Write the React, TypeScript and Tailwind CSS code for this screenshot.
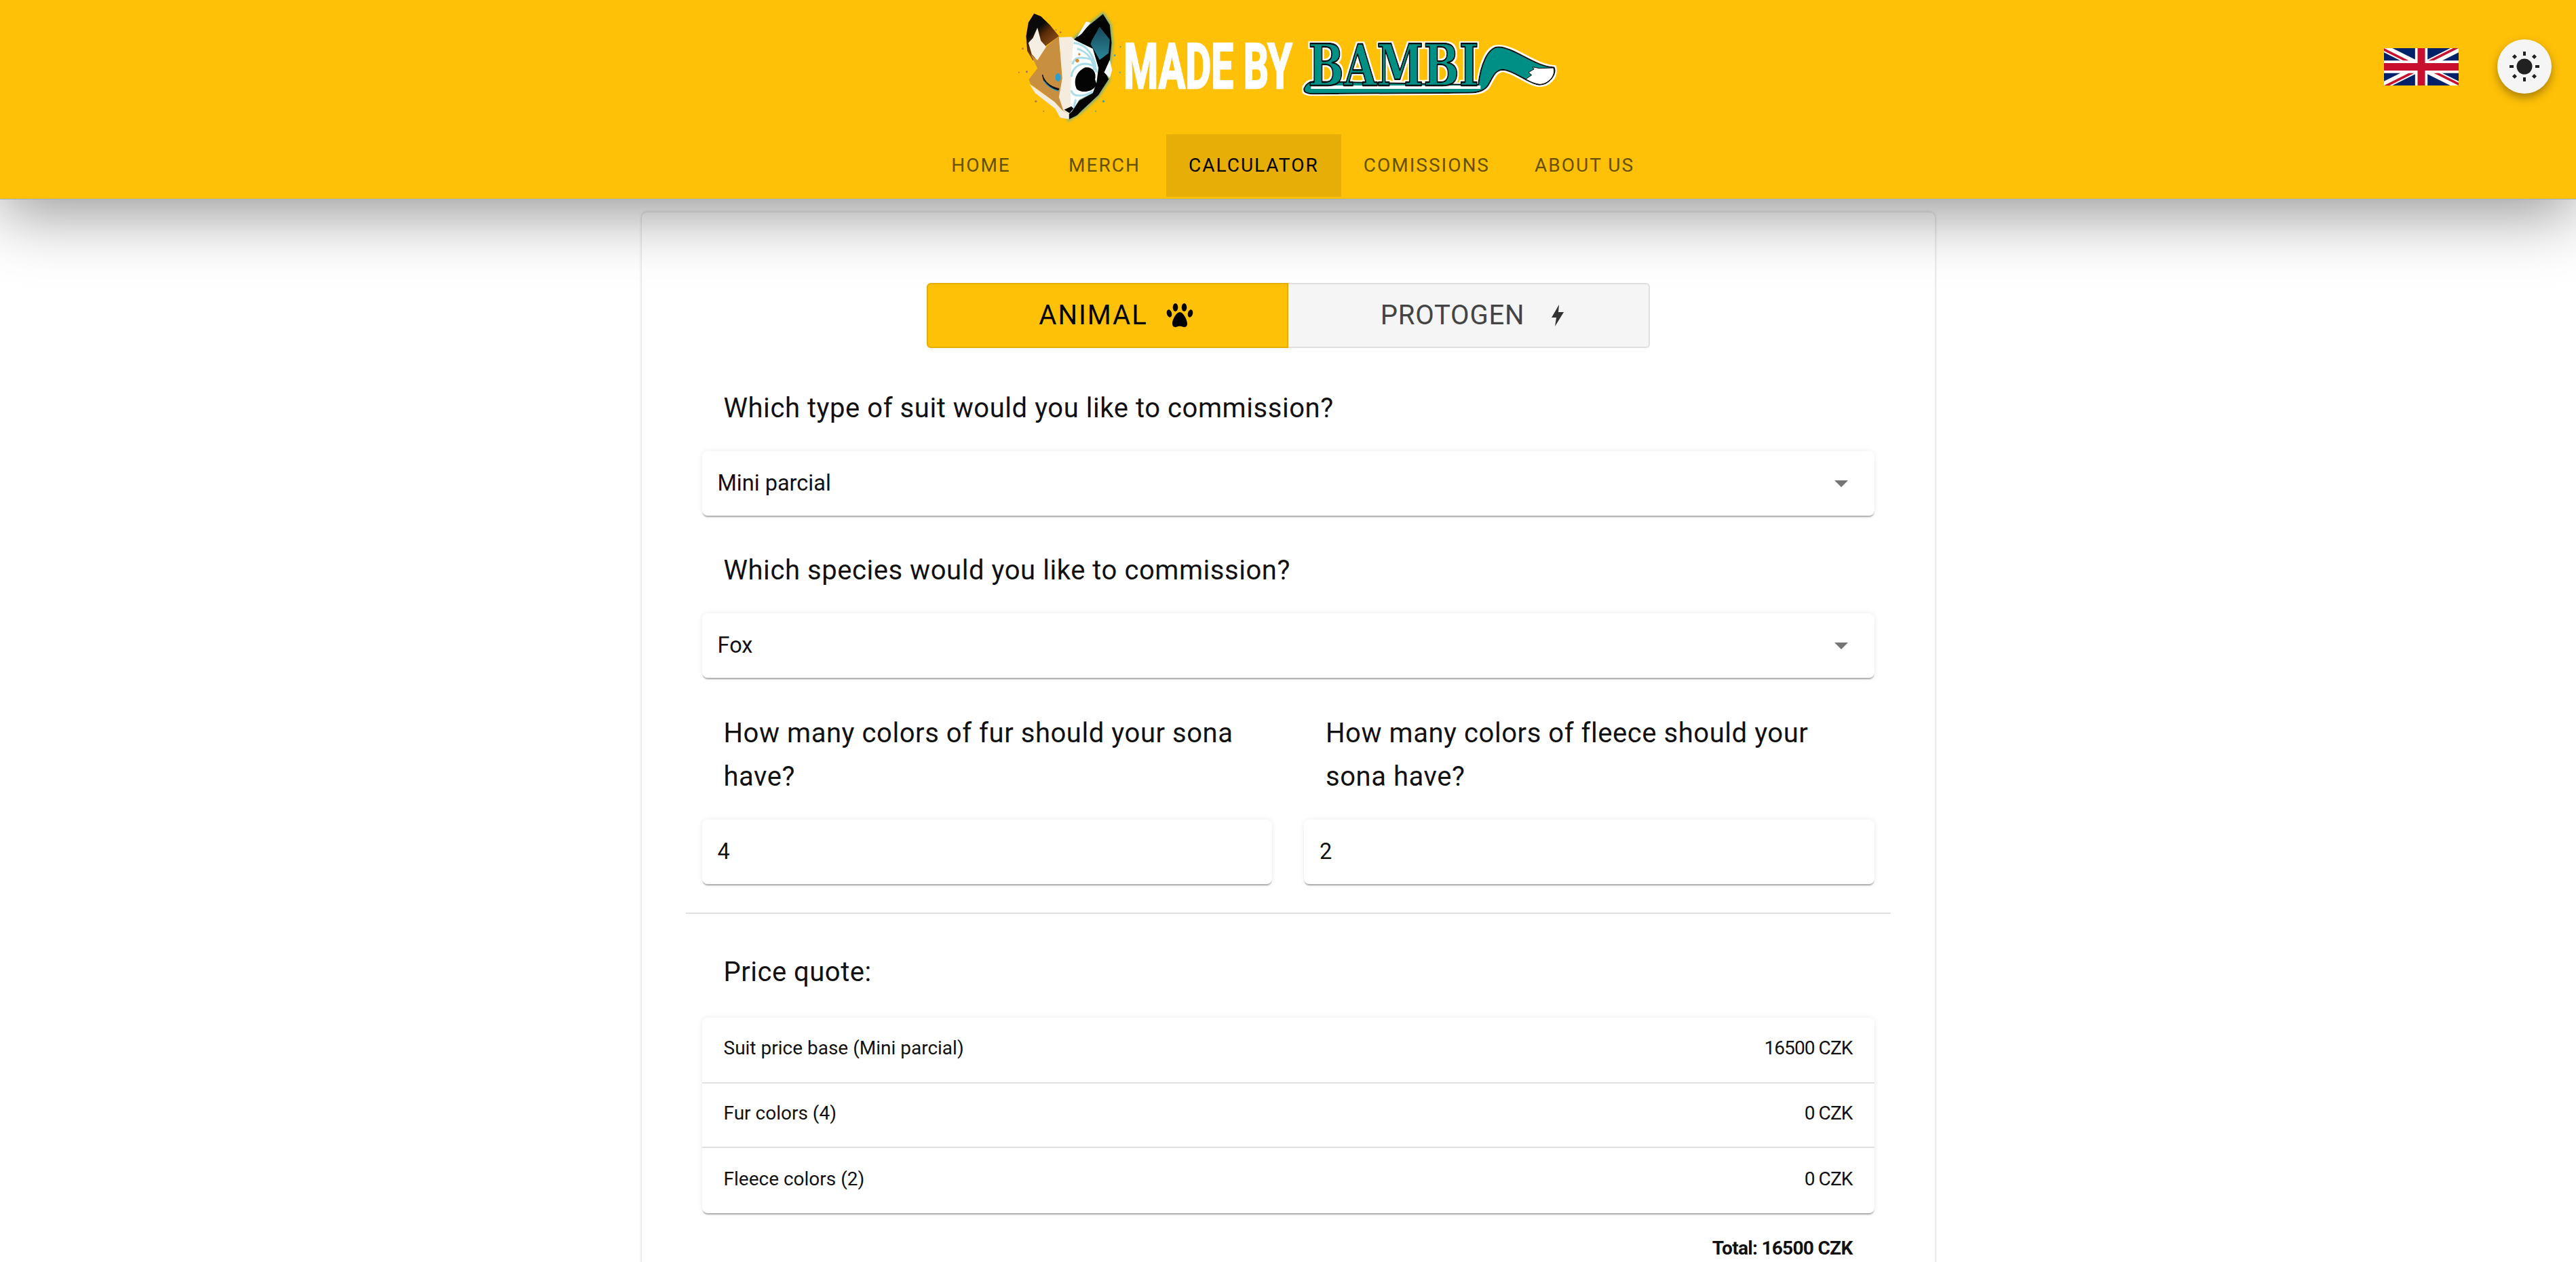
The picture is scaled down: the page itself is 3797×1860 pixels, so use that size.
import React from 'react';

const font = 'font-["Roboto",sans-serif]';

const FoxLogo = () => (
  <svg viewBox="0 0 530 570" className="w-[177px] h-[190px] shrink-0">
    <defs>
      <linearGradient id="earLeft" x1="0.3" y1="0" x2="0.7" y2="0.6">
        <stop offset="0.4" stopColor="#0a0a0a" />
        <stop offset="0.7" stopColor="#5b2c08" />
        <stop offset="1" stopColor="#7a4312" />
      </linearGradient>
      <linearGradient id="earRight" x1="0.5" y1="0" x2="0.5" y2="1">
        <stop offset="0" stopColor="#17485a" />
        <stop offset="1" stopColor="#2b8798" />
      </linearGradient>
    </defs>
    {/* glow behind the dark half */}
    <path d="M440 62L470 110L478 190L470 270L450 320L465 350L420 420L345 490L290 527V300L310 175L380 110Z" fill="#2aa6c8" opacity="0.65" stroke="#2aa6c8" strokeWidth="14" style={{ filter: 'blur(6px)' }} />
    {/* left ear */}
    <path d="M135 60L110 100L100 160L105 225L130 268L190 200L245 160L205 110L165 72Z" fill="url(#earLeft)" />
    <path d="M150 122L130 168L110 190L125 240L150 267L190 208L165 180Z" fill="#f5eee3" />
    {/* tan half */}
    <path d="M245 160L190 205L150 267L120 240L150 302L112 352L120 372L225 450L262 490L290 505L260 345Z" fill="#c98f41" />
    <path d="M115 372L225 450L262 490L290 505V527L250 520L228 480L140 412Z" fill="#f4ecdf" />
    {/* cream half */}
    <path d="M245 165L300 163L320 180L395 215L420 300L410 360L400 400L340 430L300 480L290 505L265 490L245 430L260 345Z" fill="#f4ecdf" />
    <path d="M310 175L395 215L420 300L410 370L395 410L335 440L305 490L296 505L300 300Z" fill="#ffffff" />
    <path d="M310 190C370 195 405 250 410 320M325 215C375 230 400 270 400 310M305 285C310 250 350 250 385 262M300 340C305 290 350 270 395 290M300 400C305 430 350 430 395 405M320 440C312 460 310 480 320 500" fill="none" stroke="#a9dbe9" strokeWidth="9" />
    {/* dark half */}
    <path d="M440 62L470 110L478 190L470 270L450 320L465 350L420 420L345 490L325 510L290 527V505L305 490L335 445L395 412L412 365L420 300L395 215L312 175L380 110Z" fill="#040404" />
    <path d="M425 118L390 180L385 195L425 265L465 235L470 175L450 150Z" fill="url(#earRight)" />
    <path d="M470 265L445 320L470 345L480 310Z" fill="#f2fbff" />
    <path d="M365 95L325 165L345 150L385 100Z" fill="#f2fbff" />
    {/* eye socket, nose, closed eye */}
    <path d="M362 298C395 295 412 320 405 352L412 372C400 405 350 415 325 395C310 370 312 320 362 298Z" fill="#040404" />
    <path d="M268 485L300 470L310 480L292 500Z" fill="#040404" />
    <path d="M172 330C182 362 205 383 245 392L243 398C205 392 175 370 172 330Z" fill="#111111" stroke="#111111" strokeWidth="3" />
    <path d="M178 358C195 382 215 395 243 403" fill="none" stroke="#2a9fd0" strokeWidth="4" />
    <ellipse cx="241" cy="342" rx="12" ry="18" fill="#2a9fd0" />
    <circle cx="326" cy="268" r="8" fill="#d9892f" />
    <circle cx="335" cy="240" r="5" fill="#d9892f" />
    {/* flecks */}
    <circle cx="85" cy="215" r="4" fill="#b07a4a" />
    <circle cx="103" cy="317" r="5" fill="#b07a4a" />
    <circle cx="143" cy="448" r="5" fill="#b07a4a" />
    <circle cx="252" cy="143" r="4" fill="#b07a4a" />
    <circle cx="232" cy="133" r="3" fill="#b07a4a" />
    <circle cx="68" cy="320" r="3" fill="#b07a4a" />
    <circle cx="177" cy="492" r="3" fill="#b07a4a" />
    <circle cx="442" cy="448" r="5" fill="#2a9fd0" />
    <circle cx="408" cy="492" r="3" fill="#2a9fd0" />
    <circle cx="517" cy="207" r="3" fill="#2a9fd0" />
    <circle cx="492" cy="245" r="4" fill="#2a9fd0" />
    <circle cx="515" cy="320" r="3" fill="#2a9fd0" />
  </svg>
);

const MadeBy = () => (
  <svg viewBox="0 0 251 190" className="w-[251px] h-[190px] shrink-0 overflow-visible">
    <text transform="translate(0 130) scale(0.78 1)" textLength="319" lengthAdjust="spacingAndGlyphs" fontFamily="'Liberation Sans Narrow','Roboto',sans-serif" fontWeight="700" fontSize="92" fill="#fff" stroke="#fff" strokeWidth="2.5">MADE BY</text>
  </svg>
);

const BambiLogo = () => (
  <svg viewBox="0 0 1260 570" className="w-[420px] h-[190px] shrink-0 -ml-[8px]">
    <defs>
      <filter id="outline" x="-5%" y="-5%" width="110%" height="110%">
        <feMorphology in="SourceAlpha" operator="dilate" radius="7" result="fat" />
        <feFlood floodColor="#fff" />
        <feComposite in2="fat" operator="in" result="halo" />
        <feMerge>
          <feMergeNode in="halo" />
          <feMergeNode in="SourceGraphic" />
        </feMerge>
      </filter>
    </defs>
    <g filter="url(#outline)" transform="translate(0 90)">
      <path d="M70 300C78 280 95 272 110 270L840 285C850 200 880 118 930 118C1000 120 1090 205 1175 208C1188 240 1150 285 1110 285C1060 280 1000 222 950 218C915 218 905 250 885 285C870 310 840 320 800 320L105 325C85 325 65 318 70 300Z" fill="#008f85" stroke="#111" strokeWidth="6" strokeLinejoin="round" />
      <path d="M1172 210C1186 240 1150 284 1110 283C1090 280 1070 272 1050 260L1076 242L1062 230L1086 216L1080 206L1110 212Z" fill="#fff" stroke="#111" strokeWidth="3" />
      <path d="M100 288H850V303H100Z" fill="#fff" />
      <text x="88" y="289" textLength="755" lengthAdjust="spacingAndGlyphs" fontFamily="'DejaVu Serif',serif" fontWeight="700" fontSize="254" fill="#008f85" stroke="#111" strokeWidth="7" strokeLinejoin="round">BAMBI</text>
    </g>
  </svg>
);

const UkFlag = () => (
  <svg viewBox="0 0 60 30" preserveAspectRatio="none" className="w-[110px] h-[55px]">
    <defs>
      <clipPath id="jack">
        <path d="M30 15H60V30ZV30H0ZH0V0ZV0H60Z" />
      </clipPath>
    </defs>
    <rect width="60" height="30" fill="#012169" />
    <path d="M0 0L60 30M60 0L0 30" stroke="#fff" strokeWidth="6" />
    <path d="M0 0L60 30M60 0L0 30" stroke="#c8102e" strokeWidth="4" clipPath="url(#jack)" />
    <path d="M30 0V30M0 15H60" stroke="#fff" strokeWidth="10" />
    <path d="M30 0V30M0 15H60" stroke="#c8102e" strokeWidth="6" />
  </svg>
);

const SunIcon = () => (
  <svg viewBox="0 0 48 48" className="w-[48px] h-[48px]" fill="#212121">
    <circle cx="24" cy="24" r="11.5" />
    <rect x="22" y="2" width="4" height="6" />
    <rect x="22" y="40" width="4" height="6" />
    <rect x="2" y="22" width="6" height="4" />
    <rect x="40" y="22" width="6" height="4" />
    <rect x="7" y="7" width="5" height="5" transform="rotate(45 9.5 9.5)" />
    <rect x="36" y="7" width="5" height="5" transform="rotate(45 38.5 9.5)" />
    <rect x="7" y="36" width="5" height="5" transform="rotate(45 9.5 38.5)" />
    <rect x="36" y="36" width="5" height="5" transform="rotate(45 38.5 38.5)" />
  </svg>
);

const PawIcon = () => (
  <svg viewBox="0 0 40 36" className="w-[40px] h-[36px]" fill="#000">
    <ellipse cx="4.5" cy="15" rx="3.6" ry="5.8" transform="rotate(-15 4.5 15)" />
    <ellipse cx="13.5" cy="6" rx="3.8" ry="6" />
    <ellipse cx="26.5" cy="6" rx="3.8" ry="6" />
    <ellipse cx="35.5" cy="15" rx="3.6" ry="5.8" transform="rotate(15 35.5 15)" />
    <path d="M20 13C25 13 31 24 31 30C31 35 27 36 24 34.5C22 33.5 18 33.5 16 34.5C13 36 9 35 9 30C9 24 15 13 20 13Z" />
  </svg>
);

const BoltIcon = () => (
  <svg viewBox="0 0 18 32" className="w-[18px] h-[32px]" fill="#333">
    <path d="M11 0L0 19H7L5 32L18 11H10Z" />
  </svg>
);

const Caret = () => <span className="w-0 h-0 border-x-[10px] border-x-transparent border-t-[10px] border-t-[#757575]" />;

const fieldShadow = 'shadow-[0_3px_2px_-1px_rgba(0,0,0,0.32),0_0_8px_rgba(0,0,0,0.08)]';

const Select = ({ value }: { value: string }) => (
  <div className={`h-[95px] bg-white rounded-[8px] ${fieldShadow} flex items-center justify-between pl-[23px] pr-[39px] text-[32.5px] text-[#111]`}>
    <span>{value}</span>
    <Caret />
  </div>
);

const NumberField = ({ value }: { value: string }) => (
  <div className={`h-[95px] bg-white rounded-[8px] ${fieldShadow} flex items-center pl-[23px] text-[32.5px] text-[#111]`}>
    {value}
  </div>
);

const Question = ({ children }: { children: React.ReactNode }) => (
  <p className="px-[32px] pt-[2px] pb-[31px] text-[40px] leading-[64px] tracking-[0.55px] text-[#111]">{children}</p>
);

const tabs = ['HOME', 'MERCH', 'CALCULATOR', 'COMISSIONS', 'ABOUT US'];

const rows = [
  ['Suit price base (Mini parcial)', '16500 CZK'],
  ['Fur colors (4)', '0 CZK'],
  ['Fleece colors (2)', '0 CZK'],
];

export default function App() {
  return (
    <div className={`${font} bg-white h-[1860px] overflow-hidden`}>
      {/* Header */}
      <header className="relative z-10 h-[294px] bg-[#ffc107] border-b border-[#9fb2bd] shadow-[0_20px_90px_rgba(0,0,0,0.42)]">
        <div className="flex justify-center items-start">
          <FoxLogo />
          <MadeBy />
          <BambiLogo />
        </div>
        <div className="absolute right-[36px] top-[58px] flex items-center gap-[57px]">
          <UkFlag />
          <button className="w-[80px] h-[80px] rounded-full bg-[#f5f5f5] flex items-center justify-center shadow-[0_6px_14px_rgba(0,0,0,0.35)]">
            <SunIcon />
          </button>
        </div>
        <nav className="absolute left-0 right-0 top-[198px] flex justify-center">
          {tabs.map(tab => (
            <div
              key={tab}
              className={`h-[92px] min-w-[182px] px-[33px] flex items-center justify-center text-[28px] tracking-[2px] ${
                tab === 'CALCULATOR' ? 'bg-[#e6ae06] text-black' : 'text-[#665000]'
              }`}
            >
              {tab}
            </div>
          ))}
        </nav>
      </header>

      {/* Main card */}
      <main className="w-[1906px] mx-auto mt-[19px] h-[1600px] rounded-t-[8px] bg-white shadow-[0_0_4px_rgba(0,0,0,0.22)] pt-[104px] px-[65px]">
        <div className="mx-[355px] grid grid-cols-2 h-[96px] text-[40px]">
          <div className="flex items-center justify-center gap-[27px] pl-[26px] tracking-[2px] bg-[#ffc107] border-2 border-[#e5ae06] rounded-l-[6px] text-black">
            ANIMAL <PawIcon />
          </div>
          <div className="flex items-center justify-center gap-[40px] pl-[12px] tracking-[0.8px] bg-[#f5f5f5] border-2 border-l-0 border-[#e0e0e0] rounded-r-[6px] text-[#444]">
            PROTOGEN <BoltIcon />
          </div>
        </div>

        <div className="mt-[55px] px-[24px]">
          <Question>Which type of suit would you like to commission?</Question>
          <Select value="Mini parcial" />
          <div className="mt-[47px]">
            <Question>Which species would you like to commission?</Question>
          </div>
          <Select value="Fox" />
          <div className="mt-[48px] grid grid-cols-2 gap-x-[47px]">
            <div>
              <Question>How many colors of fur should your sona have?</Question>
              <NumberField value="4" />
            </div>
            <div>
              <Question>How many colors of fleece should your sona have?</Question>
              <NumberField value="2" />
            </div>
          </div>
        </div>

        <hr className="mt-[42px] border-t-2 border-[#e0e0e0]" />

        <div className="px-[24px]">
          <p className="mt-[54px] mb-[35px] px-[32px] text-[40px] leading-[64px] tracking-[0.5px] text-[#111]">Price quote:</p>
          <div className={`bg-white rounded-[8px] ${fieldShadow}`}>
            {rows.map(([label, price], i) => (
              <div key={label} className={`pb-[5px] flex items-center justify-between px-[32px] text-[28px] text-[#111] ${i > 0 ? 'border-t-2 border-[#e0e0e0]' : ''} ${i === 2 ? 'h-[98px]' : 'h-[95px]'}`}>
                <span>{label}</span>
                <span className="tracking-[-0.9px]">{price}</span>
              </div>
            ))}
          </div>
          <p className="mt-[32px] pr-[32px] text-right text-[28px] leading-[40px] font-bold tracking-[-0.7px] text-[#111]">Total: 16500 CZK</p>
        </div>
      </main>
    </div>
  );
}
